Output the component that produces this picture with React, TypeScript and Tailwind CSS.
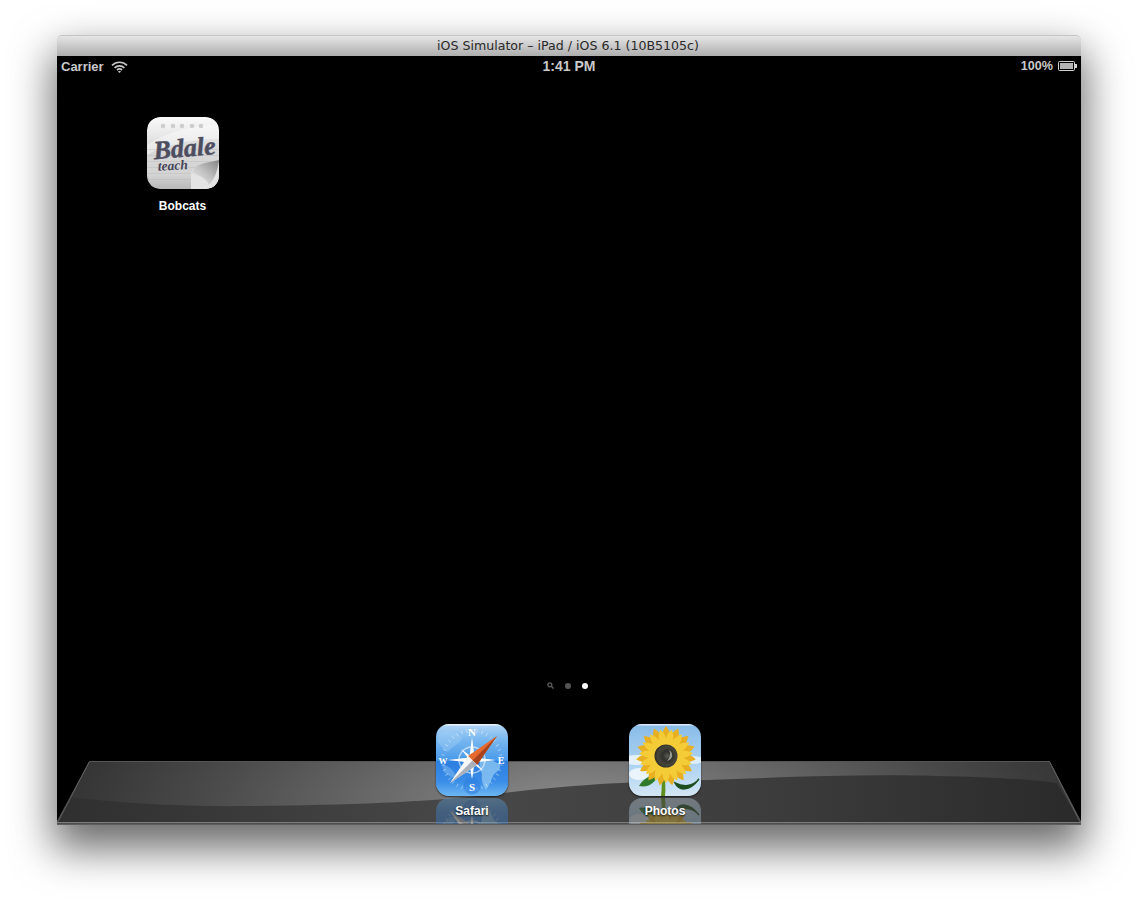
import React from "react";

const sans = "font-['Liberation_Sans',Arial,sans-serif]";

function Wifi() {
  return (
    <svg width="17" height="12" viewBox="0 0 17 12" fill="none" stroke="#c9c9c9" strokeWidth="1.7">
      <path d="M1 4.4C5.2 .2 11.8 .2 16 4.4" />
      <path d="M3.6 6.8C6.4 4.1 10.6 4.1 13.4 6.8" />
      <path d="M6 9C7.4 7.8 9.6 7.8 11 9" />
      <path d="M8.5 12L7 10.4C7.9 9.8 9.1 9.8 10 10.4Z" fill="#c9c9c9" stroke="none" />
    </svg>
  );
}

function Battery() {
  return (
    <svg width="19" height="10" viewBox="0 0 19 10">
      <rect x="0.5" y="0.5" width="16" height="9" rx="1" fill="none" stroke="#d2d2d2" />
      <rect x="2" y="2" width="13" height="6" fill="#b4b4b4" />
      <rect x="17" y="3" width="2" height="4" fill="#d2d2d2" />
    </svg>
  );
}

function BobcatsIcon() {
  const lines = [32, 38, 44, 50, 56, 62];
  return (
    <svg width="72" height="72" viewBox="0 0 72 72" className="block">
      <defs>
        <linearGradient id="bob-bg" x1="0" y1="0" x2="0" y2="1">
          <stop offset="0" stopColor="#fafafa" />
          <stop offset="0.25" stopColor="#e8e8e8" />
          <stop offset="0.45" stopColor="#d8d8d8" />
          <stop offset="0.8" stopColor="#d4d4d4" />
          <stop offset="1" stopColor="#b8b8b8" />
        </linearGradient>
        <linearGradient id="bob-curl" x1="0" y1="1" x2="1" y2="0">
          <stop offset="0" stopColor="#f0f0f0" />
          <stop offset="0.5" stopColor="#c0c0c0" />
          <stop offset="1" stopColor="#848484" />
        </linearGradient>
      </defs>
      <rect width="72" height="72" rx="13" fill="url(#bob-bg)" />
      <path d="M0 38C20 26 50 22 72 22V8C44 8 18 16 0 28Z" fill="#ffffff" opacity="0.4" />
      {lines.map((y) => (
        <rect key={y} x="0" y={y} width="72" height="0.6" fill="#aeaeae" opacity="0.45" />
      ))}
      {[16, 26, 35, 45, 54].map((x) => (
        <circle key={x} cx={x} cy="9" r="2.3" fill="#cdcdcd" />
      ))}
      <g transform="rotate(-5 34 38)">
        <text x="7" y="40" fontFamily="'Liberation Serif',serif" fontStyle="italic" fontWeight="700" fontSize="26" fill="#4d4d60" stroke="#4d4d60" strokeWidth="0.5">
          Bdale
        </text>
      </g>
      <g transform="rotate(-3 25 53)">
        <text x="11" y="53" fontFamily="'Liberation Serif',serif" fontStyle="italic" fontWeight="700" fontSize="13.5" fill="#454558">
          teach
        </text>
      </g>
      <path d="M44 72V58C44 52 48 50 52 50C60 50 66 47 72 43V59C72 67 67 72 59 72Z" fill="#e4e4e4" />
      <path d="M45 56C46 50 52 47 58 46C63 45 68 44 72 43C71 52 68 62 62 68C60 62 52 58 45 56Z" fill="url(#bob-curl)" />
    </svg>
  );
}

function SafariIcon({ id, reflected }: { id: string; reflected?: boolean }) {
  const ticks = Array.from({ length: 36 }, (_, i) => i * 10);
  return (
    <svg width="72" height="72" viewBox="0 0 72 72" className="block">
      <defs>
        <linearGradient id={`${id}-bg`} x1="0" y1="0" x2="0" y2="1">
          <stop offset="0" stopColor="#b4d8f6" />
          <stop offset="0.2" stopColor="#7cb9f0" />
          <stop offset="0.5" stopColor="#4a9bea" />
          <stop offset="0.52" stopColor="#2d7fe0" />
          <stop offset="0.8" stopColor="#3a8de8" />
          <stop offset="1" stopColor="#6cb6f2" />
        </linearGradient>
        <clipPath id={`${id}-clip`}>
          <rect width="72" height="72" rx="13" />
        </clipPath>
      </defs>
      <g clipPath={`url(#${id}-clip)`}>
        <rect width="72" height="72" fill={`url(#${id}-bg)`} />
        <path d="M44 38C50 35 58 36 63 40C66 44 62 47 58 50C56 54 54 60 50 66C47 62 45 56 46 50C44 46 43 42 44 38Z" fill="#8cc6f3" opacity="0.8" />
        <path d="M2 10C10 6 22 8 26 14C24 20 16 22 12 28C8 26 4 22 2 18Z" fill="#a9d3f5" opacity="0.35" />
        <path d="M6 40C12 42 18 46 20 52C16 56 12 50 8 48Z" fill="#8cc6f3" opacity="0.45" />
        <g stroke="#ffffff" strokeOpacity="0.4" strokeWidth="0.9">
          {ticks.map((a) => (
            <line key={a} x1="36" y1="5" x2="36" y2="8.5" transform={`rotate(${a} 36 36)`} />
          ))}
        </g>
        <circle cx="36" cy="36" r="13" fill="none" stroke="#ffffff" strokeOpacity="0.55" strokeWidth="1.5" />
        <path d="M36 13L38.6 33.4L60 36L38.6 38.6L36 56L33.4 38.6L12 36L33.4 33.4Z" fill="#ffffff" />
        <g fill="#ffffff">
          <path d="M25 25L36 33L39 36L36 39Z" />
          <path d="M47 25L39 36L33 36Z" />
          <path d="M25 47L33 36L39 36Z" />
          <path d="M47 47L36 39L33 36L36 33Z" />
        </g>
        <circle cx="36" cy="62" r="8.5" fill="#2f80df" opacity="0.6" />
        <path d="M61 12L41 41L32 32Z" fill="#e8692e" />
        <path d="M61 12L41 41L36.5 36.5Z" fill="#a8451f" />
        <path d="M14 59L32 32L41 41Z" fill="#f6f6f6" />
        <path d="M14 59L41 41L36.5 36.5Z" fill="#aab0ba" />
        {!reflected && (
          <>
            <text x="36" y="12" textAnchor="middle" fontFamily="'Liberation Serif',serif" fontWeight="700" fontSize="11" fill="#ffffff">N</text>
            <text x="36" y="66.5" textAnchor="middle" fontFamily="'Liberation Serif',serif" fontWeight="700" fontSize="11" fill="#ffffff">S</text>
            <text x="7" y="39.5" textAnchor="middle" fontFamily="'Liberation Serif',serif" fontWeight="700" fontSize="9" fill="#ffffff">W</text>
            <text x="65" y="39.5" textAnchor="middle" fontFamily="'Liberation Serif',serif" fontWeight="700" fontSize="10" fill="#ffffff">E</text>
          </>
        )}
        <rect y="0" width="72" height="1.5" fill="#ffffff" opacity="0.7" />
      </g>
    </svg>
  );
}

function PhotosIcon({ id }: { id: string }) {
  const outer = Array.from({ length: 15 }, (_, i) => i * 24);
  const inner = Array.from({ length: 15 }, (_, i) => i * 24 + 12);
  return (
    <svg width="72" height="72" viewBox="0 0 72 72" className="block">
      <defs>
        <linearGradient id={`${id}-sky`} x1="0" y1="0" x2="0" y2="1">
          <stop offset="0" stopColor="#88bbe8" />
          <stop offset="0.5" stopColor="#a8d0f0" />
          <stop offset="1" stopColor="#d2e6f5" />
        </linearGradient>
        <radialGradient id={`${id}-disc`} cx="0.55" cy="0.5" r="0.55">
          <stop offset="0" stopColor="#5c5c56" />
          <stop offset="0.35" stopColor="#30302c" />
          <stop offset="0.75" stopColor="#46463c" />
          <stop offset="1" stopColor="#2a2820" />
        </radialGradient>
        <clipPath id={`${id}-clip`}>
          <rect width="72" height="72" rx="13" />
        </clipPath>
      </defs>
      <g clipPath={`url(#${id}-clip)`}>
        <rect width="72" height="72" fill={`url(#${id}-sky)`} />
        <ellipse cx="8" cy="36" rx="16" ry="5" fill="#ffffff" opacity="0.7" />
        <ellipse cx="10" cy="50" rx="10" ry="6" fill="#ffffff" opacity="0.7" />
        <ellipse cx="62" cy="36" rx="14" ry="4" fill="#ffffff" opacity="0.6" />
        <path d="M32 46C33 56 33 64 32 72H36C37 64 36 56 35 46Z" fill="#5f8f1e" />
        <path d="M30 50C22 50 13 56 10 62C18 64 26 60 30 50Z" fill="#2f7a2a" />
        <path d="M46 59C50 67 60 68 70 55C64 63 54 63 46 59Z" fill="#1e4f1e" stroke="#1e4f1e" strokeWidth="1.5" />
        {outer.map((a) => (
          <path key={a} d="M37 2C43 10 44 20 37 32C30 20 31 10 37 2Z" fill="#e8b020" transform={`rotate(${a} 37 32)`} />
        ))}
        {inner.map((a) => (
          <path key={a} d="M37 5C42 12 42 20 37 32C32 20 32 12 37 5Z" fill="#f4cc38" transform={`rotate(${a} 37 32)`} />
        ))}
        <circle cx="37" cy="32" r="11.5" fill={`url(#${id}-disc)`} />
        <path d="M40 26C45 29 44 36 38 37C41 34 42 29 40 26Z" fill="#c6c6b8" opacity="0.7" />
        <rect y="0" width="72" height="1.5" fill="#ffffff" opacity="0.7" />
      </g>
    </svg>
  );
}

function Shelf() {
  return (
    <svg width="1024" height="64" viewBox="0 0 1024 64" className="block">
      <defs>
        <radialGradient id="shelf-top" gradientUnits="userSpaceOnUse" cx="520" cy="44" r="500" gradientTransform="translate(0 30) scale(1 0.3)">
          <stop offset="0" stopColor="#8c8c8c" />
          <stop offset="0.35" stopColor="#6e6e6e" />
          <stop offset="0.75" stopColor="#494949" />
          <stop offset="1" stopColor="#363636" />
        </radialGradient>
        <linearGradient id="shelf-low" x1="0" y1="0" x2="1" y2="0">
          <stop offset="0" stopColor="#2f2f2f" />
          <stop offset="0.4" stopColor="#484848" />
          <stop offset="0.7" stopColor="#3c3c3c" />
          <stop offset="1" stopColor="#2a2a2a" />
        </linearGradient>
      </defs>
      <path d="M32.5 .5H992.5L1024 61H0Z" fill="url(#shelf-top)" stroke="#555555" strokeWidth="1" />
      <path d="M13 36C60 42 130 46 190 45C290 44 360 42 440 33C500 25 560 21 650 19C730 16 810 13 880 15C930 16 970 18 1000 22L1023 61H1Z" fill="url(#shelf-low)" />
      <path d="M32.5 .5L1 61M992.5 .5L1023 61" stroke="#5c5c5c" fill="none" />
      <rect x="0" y="61" width="1024" height="1.5" fill="#7c7c7c" />
      <rect x="0" y="62.5" width="1024" height="1.5" fill="#5e5e5e" />
    </svg>
  );
}

function DockItem({ name, children, reflection }: { name: string; children: React.ReactNode; reflection: React.ReactNode }) {
  return (
    <div className="relative flex w-[72px] flex-col">
      <div className="rounded-[13px] shadow-[0_1px_2px_rgba(0,0,0,0.6)]">{children}</div>
      <div className="mt-[2px] h-[26px] overflow-hidden opacity-35">
        <div className="-scale-y-100">{reflection}</div>
      </div>
      <div className={`absolute left-[-20px] right-[-20px] top-[79px] text-center text-[12px] leading-[16px] font-bold text-white [text-shadow:0_1px_2px_rgba(0,0,0,0.8)] ${sans}`}>
        {name}
      </div>
    </div>
  );
}

export default function App() {
  return (
    <div className={`min-h-[904px] bg-white pt-[35px] pl-[57px] ${sans}`}>
      <div className="w-[1024px] overflow-visible rounded-t-[5px] shadow-[0_20px_42px_4px_rgba(0,0,0,0.58)]">
        <div className="flex h-[21px] items-center justify-center rounded-t-[5px] border-t border-[#c4c4c4] bg-gradient-to-b from-[#e6e6e6] to-[#aeaeae] pt-[1px] pr-[2px] text-[12.6px] leading-none text-[#2a2a2a] font-['DejaVu_Sans',sans-serif]">
          iOS Simulator – iPad / iOS 6.1 (10B5105c)
        </div>
        <div className="flex h-[769px] flex-col bg-black">
          <div className="relative flex h-[20px] items-center justify-between pt-[1px] pl-[4px] pr-[4px] text-[#c9c9c9]">
            <div className="flex items-center gap-[7px] text-[13px] font-bold">
              <span>Carrier</span>
              <Wifi />
            </div>
            <div className="absolute left-0 right-0 text-center text-[14px] font-bold">1:41 PM</div>
            <div className="flex items-center gap-[5px] text-[12.6px] font-bold">
              <span>100%</span>
              <Battery />
            </div>
          </div>
          <div className="flex-1 pt-[41px] pl-[90px]">
            <div className="relative w-[72px]">
              <div className="overflow-hidden rounded-[13px]">
                <BobcatsIcon />
              </div>
              <div className="absolute left-[-20px] right-[-20px] top-[81px] pr-[1px] text-center text-[12px] leading-[16px] font-bold text-white">
                Bobcats
              </div>
            </div>
          </div>
          <div className="mb-[35px] flex items-center justify-center gap-[11px] pr-[4px]">
            <svg width="7" height="7" viewBox="0 0 7 7" fill="none" stroke="#5c5c5c" strokeWidth="1.3">
              <circle cx="2.8" cy="2.8" r="2" />
              <path d="M4.3 4.3L6.6 6.6" />
            </svg>
            <span className="h-[6px] w-[6px] rounded-full bg-[#555]" />
            <span className="h-[6px] w-[6px] rounded-full bg-white" />
          </div>
          <div className="relative h-[101px]">
            <div className="absolute bottom-0 left-0">
              <Shelf />
            </div>
            <div className="relative flex justify-center gap-[121px] pr-[1px]">
              <DockItem name="Safari" reflection={<SafariIcon id="safari-r" reflected />}>
                <SafariIcon id="safari" />
              </DockItem>
              <DockItem name="Photos" reflection={<PhotosIcon id="photos-r" />}>
                <PhotosIcon id="photos" />
              </DockItem>
            </div>
          </div>
        </div>
      </div>
    </div>
  );
}
